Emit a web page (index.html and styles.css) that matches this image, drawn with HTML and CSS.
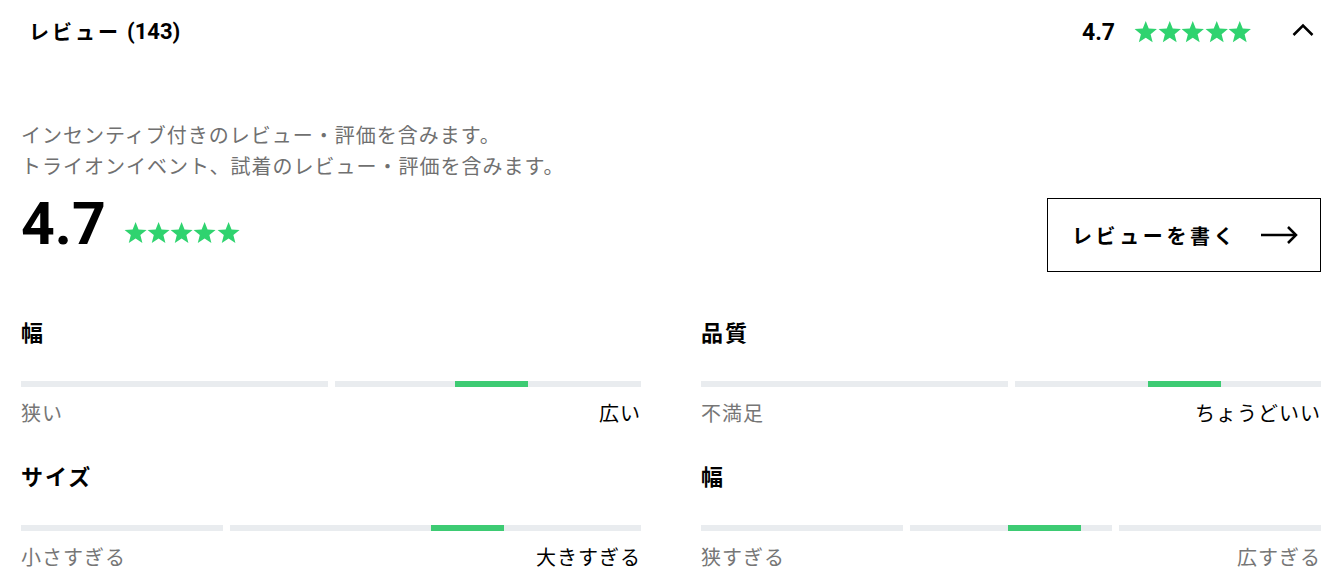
FILE: index.html
```html
<!DOCTYPE html>
<html lang="ja">
<head>
<meta charset="utf-8">
<title>レビュー</title>
<link rel="stylesheet" href="styles.css">
</head>
<body>
<div class="page">
  <header class="head">
    <h2 class="head-title"><span>レビュー</span><span class="num">(143)</span></h2>
    <div class="head-right">
      <span class="head-score num">4.7</span>
      <span class="stars">
        <svg class="star" viewBox="0 0 24 24"><path d="M12 1L15.06 8.79L23.41 9.29L16.95 14.61L19.05 22.71L12 18.2L4.95 22.71L7.05 14.61L0.59 9.29L8.94 8.79Z"/></svg>
        <svg class="star" viewBox="0 0 24 24"><path d="M12 1L15.06 8.79L23.41 9.29L16.95 14.61L19.05 22.71L12 18.2L4.95 22.71L7.05 14.61L0.59 9.29L8.94 8.79Z"/></svg>
        <svg class="star" viewBox="0 0 24 24"><path d="M12 1L15.06 8.79L23.41 9.29L16.95 14.61L19.05 22.71L12 18.2L4.95 22.71L7.05 14.61L0.59 9.29L8.94 8.79Z"/></svg>
        <svg class="star" viewBox="0 0 24 24"><path d="M12 1L15.06 8.79L23.41 9.29L16.95 14.61L19.05 22.71L12 18.2L4.95 22.71L7.05 14.61L0.59 9.29L8.94 8.79Z"/></svg>
        <svg class="star" viewBox="0 0 24 24"><path d="M12 1L15.06 8.79L23.41 9.29L16.95 14.61L19.05 22.71L12 18.2L4.95 22.71L7.05 14.61L0.59 9.29L8.94 8.79Z"/></svg>
      </span>
      <svg class="chevron" viewBox="0 0 22 14"><polyline points="1.5,12 11,2.5 20.5,12"/></svg>
    </div>
  </header>

  <section class="summary">
    <p class="note">インセンティブ付きのレビュー・評価を含みます。<br>トライオンイベント、試着のレビュー・評価を含みます。</p>
    <div class="score-row">
      <div class="score">
        <span class="score-num num">4.7</span>
        <span class="stars small">
          <svg class="star" viewBox="0 0 24 24"><path d="M12 1L15.06 8.79L23.41 9.29L16.95 14.61L19.05 22.71L12 18.2L4.95 22.71L7.05 14.61L0.59 9.29L8.94 8.79Z"/></svg>
          <svg class="star" viewBox="0 0 24 24"><path d="M12 1L15.06 8.79L23.41 9.29L16.95 14.61L19.05 22.71L12 18.2L4.95 22.71L7.05 14.61L0.59 9.29L8.94 8.79Z"/></svg>
          <svg class="star" viewBox="0 0 24 24"><path d="M12 1L15.06 8.79L23.41 9.29L16.95 14.61L19.05 22.71L12 18.2L4.95 22.71L7.05 14.61L0.59 9.29L8.94 8.79Z"/></svg>
          <svg class="star" viewBox="0 0 24 24"><path d="M12 1L15.06 8.79L23.41 9.29L16.95 14.61L19.05 22.71L12 18.2L4.95 22.71L7.05 14.61L0.59 9.29L8.94 8.79Z"/></svg>
          <svg class="star" viewBox="0 0 24 24"><path d="M12 1L15.06 8.79L23.41 9.29L16.95 14.61L19.05 22.71L12 18.2L4.95 22.71L7.05 14.61L0.59 9.29L8.94 8.79Z"/></svg>
        </span>
      </div>
      <a class="write-btn" href="#">
        <span class="write-label">レビューを書く</span>
        <svg class="arrow" viewBox="0 0 38 20"><line x1="1" y1="10" x2="36" y2="10"/><polyline points="28,2 36,10 28,18"/></svg>
      </a>
    </div>
  </section>

  <div class="ratings">
    <div class="rating">
      <h3 class="rating-title">幅</h3>
      <div class="track">
        <span class="seg"></span><span class="seg"></span>
        <span class="marker" style="left:70%"></span>
      </div>
      <div class="rating-labels"><span class="lbl">狭い</span><span class="lbl on">広い</span></div>
    </div>
    <div class="rating">
      <h3 class="rating-title">品質</h3>
      <div class="track">
        <span class="seg"></span><span class="seg"></span>
        <span class="marker" style="left:72.1%"></span>
      </div>
      <div class="rating-labels"><span class="lbl">不満足</span><span class="lbl on">ちょうどいい</span></div>
    </div>
    <div class="rating">
      <h3 class="rating-title">サイズ</h3>
      <div class="track">
        <span class="seg"></span><span class="seg wide"></span>
        <span class="marker" style="left:66.1%"></span>
      </div>
      <div class="rating-labels"><span class="lbl">小さすぎる</span><span class="lbl on">大きすぎる</span></div>
    </div>
    <div class="rating">
      <h3 class="rating-title">幅</h3>
      <div class="track">
        <span class="seg"></span><span class="seg"></span><span class="seg"></span>
        <span class="marker" style="left:49.5%"></span>
      </div>
      <div class="rating-labels"><span class="lbl">狭すぎる</span><span class="lbl">広すぎる</span></div>
    </div>
  </div>
</div>
</body>
</html>
```

FILE: styles.css
```css
* { box-sizing: border-box; }

html, body {
  margin: 0;
  background: #fff;
}

body {
  font-family: "Noto Sans CJK JP", "Noto Sans", sans-serif;
  color: #000;
}

.num {
  font-family: Roboto, "Noto Sans", sans-serif;
}

.page {
  padding: 0 13px 0 21px;
}

/* header */
.head {
  height: 64px;
  padding: 0 7.5px 0 8px;
  display: flex;
  align-items: center;
  justify-content: space-between;
}

.head-title {
  margin: 0;
  font-size: 20px;
  font-weight: 700;
  letter-spacing: 3px;
  line-height: 28px;
  display: flex;
  align-items: center;
  gap: 6px;
}

.head-title .num {
  font-size: 22px;
  letter-spacing: 0;
  font-weight: 700;
}

.head-right {
  display: flex;
  align-items: center;
}

.head-score {
  font-size: 23px;
  font-weight: 700;
  letter-spacing: 0;
  margin-right: 19px;
}

.stars {
  display: flex;
}

.star {
  width: 23.5px;
  height: 23.5px;
  display: block;
}

.star path {
  fill: #2fd36f;
}

.stars.small .star {
  width: 23.2px;
  height: 23.2px;
}

.chevron {
  width: 22px;
  height: 14px;
  margin-left: 40px;
  margin-top: -4px;
}

.chevron polyline {
  fill: none;
  stroke: #000;
  stroke-width: 2.5;
}

/* summary */
.summary {
  margin-top: 55px;
}

.note {
  margin: 0;
  font-size: 20px;
  line-height: 31px;
  letter-spacing: 1px;
  color: #707070;
}

.score-row {
  margin-top: 14px;
  display: flex;
  justify-content: space-between;
  align-items: flex-start;
}

.score {
  display: flex;
  align-items: flex-end;
  gap: 18px;
}

.score-num {
  font-size: 59px;
  line-height: 58px;
  font-weight: 700;
  letter-spacing: 0;
}

.score .stars {
  margin-bottom: 9px;
}

.write-btn {
  margin-top: 3px;
  width: 274px;
  height: 74px;
  border: 1px solid #000;
  display: flex;
  align-items: center;
  padding: 0 22px 0 24px;
  text-decoration: none;
  color: #000;
}

.write-label {
  font-size: 20px;
  font-weight: 700;
  letter-spacing: 3.6px;
}

.arrow {
  width: 38px;
  height: 20px;
  margin-left: auto;
}

.arrow line,
.arrow polyline {
  fill: none;
  stroke: #000;
  stroke-width: 2.5;
}

/* ratings */
.ratings {
  margin-top: 45px;
  display: grid;
  grid-template-columns: 620px 620px;
  column-gap: 60px;
  row-gap: 34px;
}

.rating-title {
  margin: 0;
  font-size: 22px;
  line-height: 28px;
  font-weight: 700;
  letter-spacing: 2px;
}

.track {
  position: relative;
  margin-top: 36px;
  height: 6px;
  display: flex;
  gap: 7px;
}

.seg {
  flex: 1 1 0;
  background: #e9ecef;
}

.seg.wide {
  flex: 2.04 1 0;
}

.marker {
  position: absolute;
  top: 0;
  width: 11.8%;
  height: 6px;
  background: #3dcb73;
}

.rating-labels {
  margin-top: 12px;
  display: flex;
  justify-content: space-between;
  font-size: 20px;
  line-height: 28px;
  letter-spacing: 1px;
}

.lbl {
  color: #767676;
}

.lbl.on {
  color: #000;
}
```
